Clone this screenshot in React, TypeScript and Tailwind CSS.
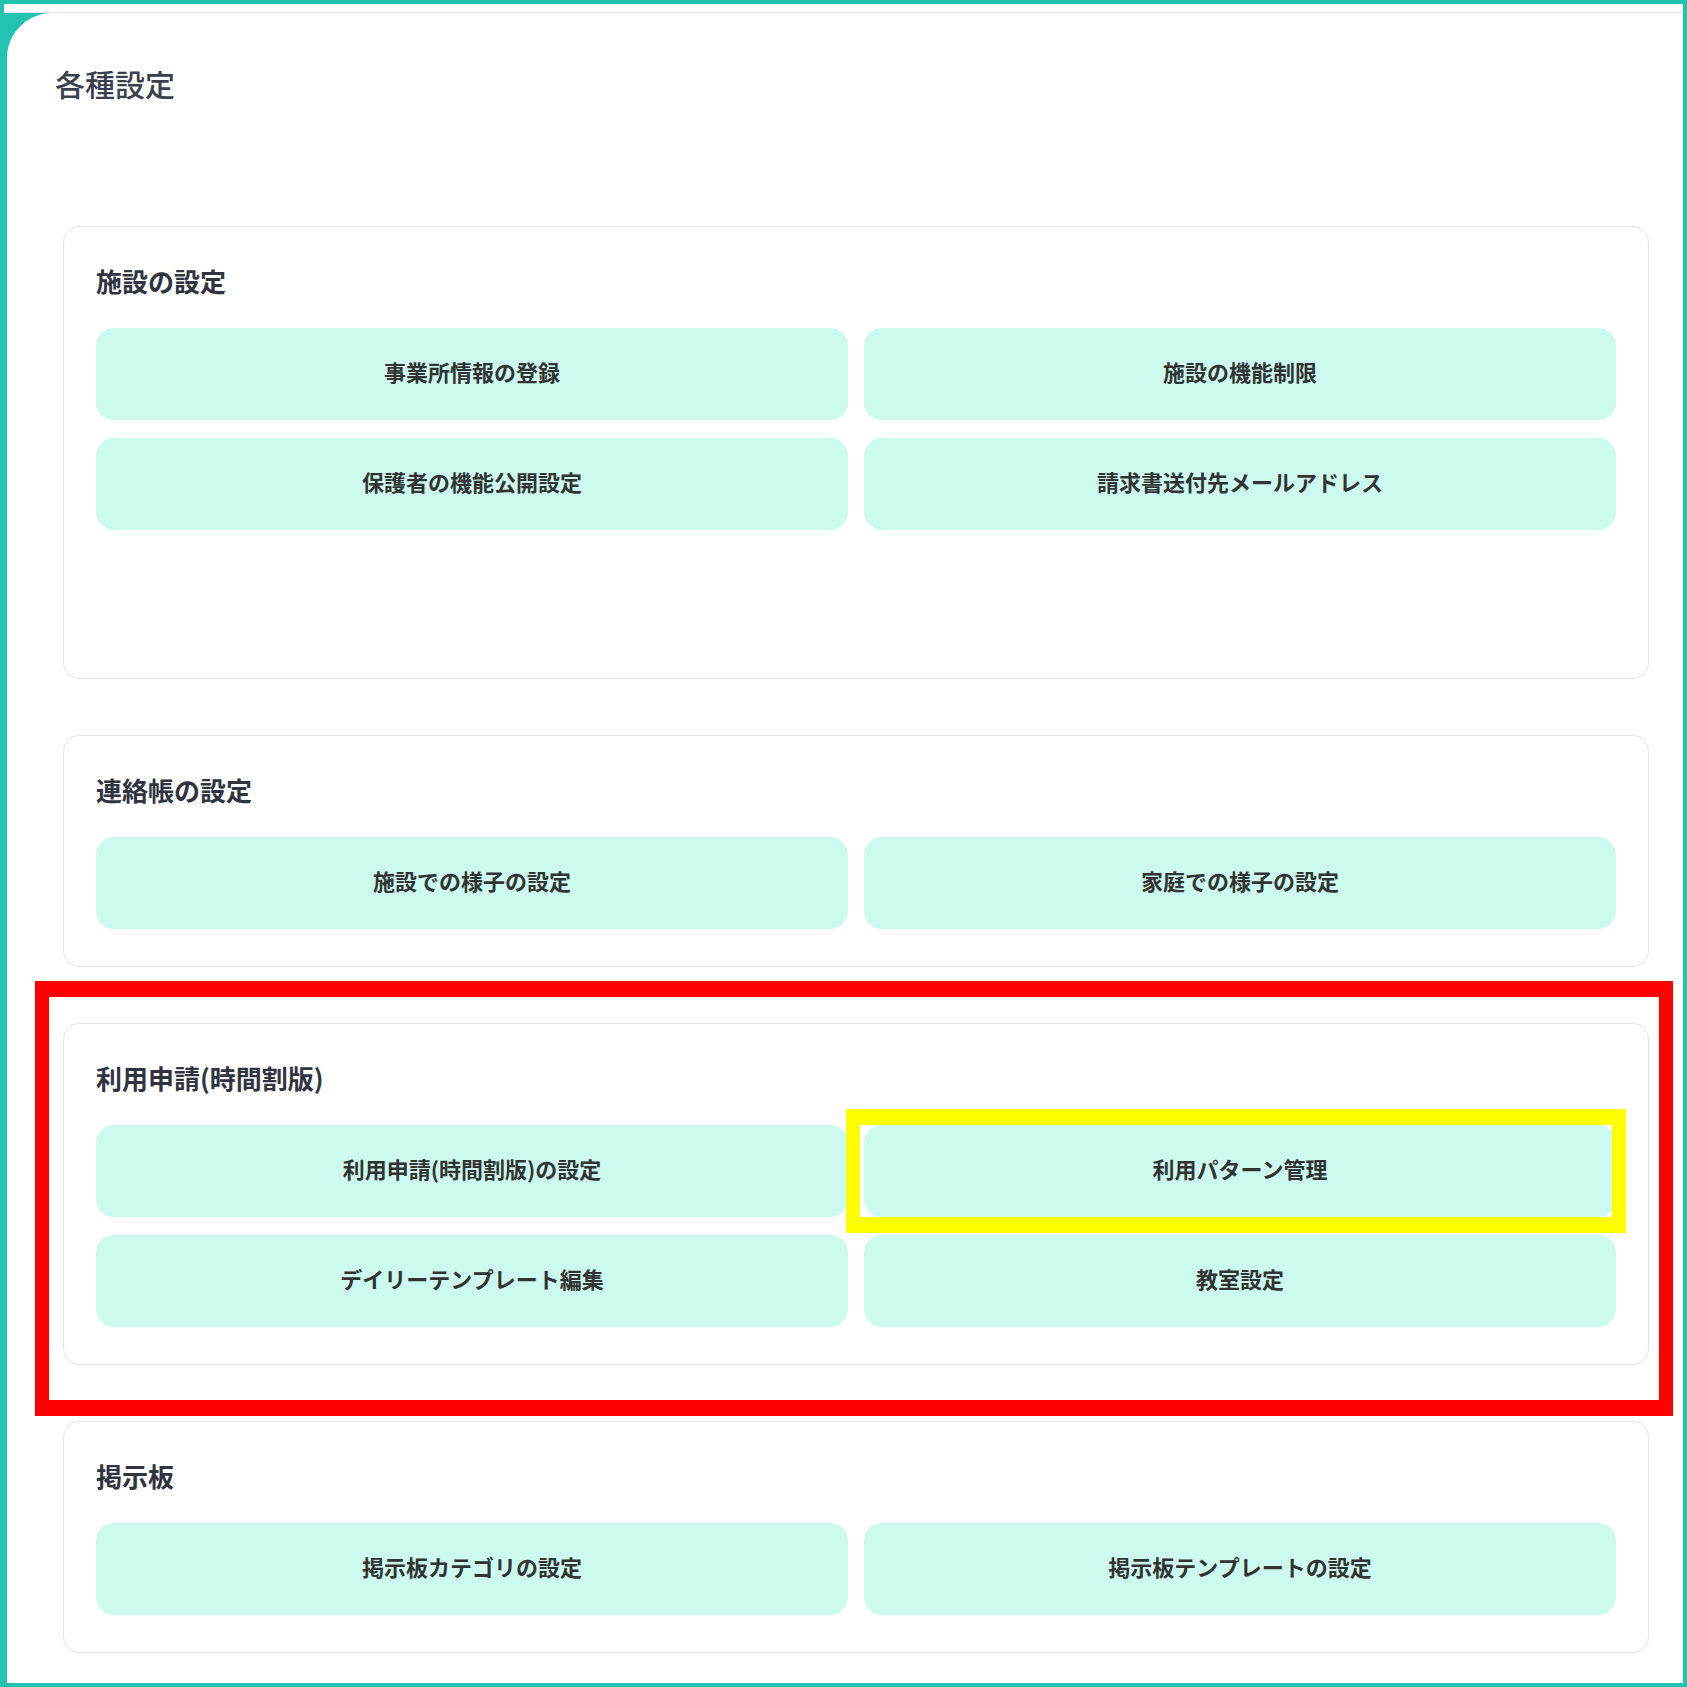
const sections = [
  {
    title: "施設の設定",
    items: ["事業所情報の登録", "施設の機能制限", "保護者の機能公開設定", "請求書送付先メールアドレス"],
    tall: true,
  },
  {
    title: "連絡帳の設定",
    items: ["施設での様子の設定", "家庭での様子の設定"],
  },
  {
    title: "利用申請(時間割版)",
    items: ["利用申請(時間割版)の設定", "利用パターン管理", "デイリーテンプレート編集", "教室設定"],
    marked: true,
  },
  {
    title: "掲示板",
    items: ["掲示板カテゴリの設定", "掲示板テンプレートの設定"],
  },
];

function Section({
  title,
  items,
  tall,
  marked,
}: {
  title: string;
  items: string[];
  tall?: boolean;
  marked?: boolean;
}) {
  return (
    <section
      className={`relative rounded-[16px] border border-[#e4e4ec] bg-white px-[32px] pt-[34px] pb-[37px] ${
        tall ? "min-h-[453px]" : ""
      }`}
    >
      <h2 className="mb-[28px] text-[26px] leading-[39px] font-bold text-[#2f3440]">{title}</h2>
      <div className="grid grid-cols-2 gap-x-[16px] gap-y-[18px]">
        {items.map((label) => (
          <button
            key={label}
            className="flex h-[92px] items-center justify-center rounded-[18px] bg-[#ccfaee] pb-[6px] text-[22px] font-semibold text-[#333]"
          >
            {label}
          </button>
        ))}
      </div>
      {marked && (
        <>
          <div className="pointer-events-none absolute left-[-29px] top-[-43px] h-[435px] w-[1638px] border-x-[14px] border-y-[16px] border-[#ff0000]" />
          <div className="pointer-events-none absolute left-[782px] top-[85px] h-[124px] w-[780px] border-x-[14px] border-y-[16px] border-[#ffff00]" />
        </>
      )}
    </section>
  );
}

export default function App() {
  return (
    <div className="flex h-[1687px] w-[1687px] flex-col border-[4px] border-[#22c3b0] bg-white font-['Noto_Sans_CJK_JP','Noto_Sans',sans-serif]">
      <div className="h-[8px] shrink-0" />
      <div className="shrink-0 border-t border-[#e2e2e8]" />
      <div className="flex flex-1 flex-col bg-[#22c3b0] pl-[3px]">
        <main className="flex-1 rounded-tl-[45px] bg-white pt-[48px] pr-[34px] pl-[48px]">
          <h1 className="text-[30px] leading-[45px] font-medium text-[#3a404c]">各種設定</h1>
          <div className="mt-[120px] ml-[8px] flex flex-col gap-[56px]">
            {sections.map((s) => (
              <Section key={s.title} {...s} />
            ))}
          </div>
        </main>
      </div>
    </div>
  );
}
